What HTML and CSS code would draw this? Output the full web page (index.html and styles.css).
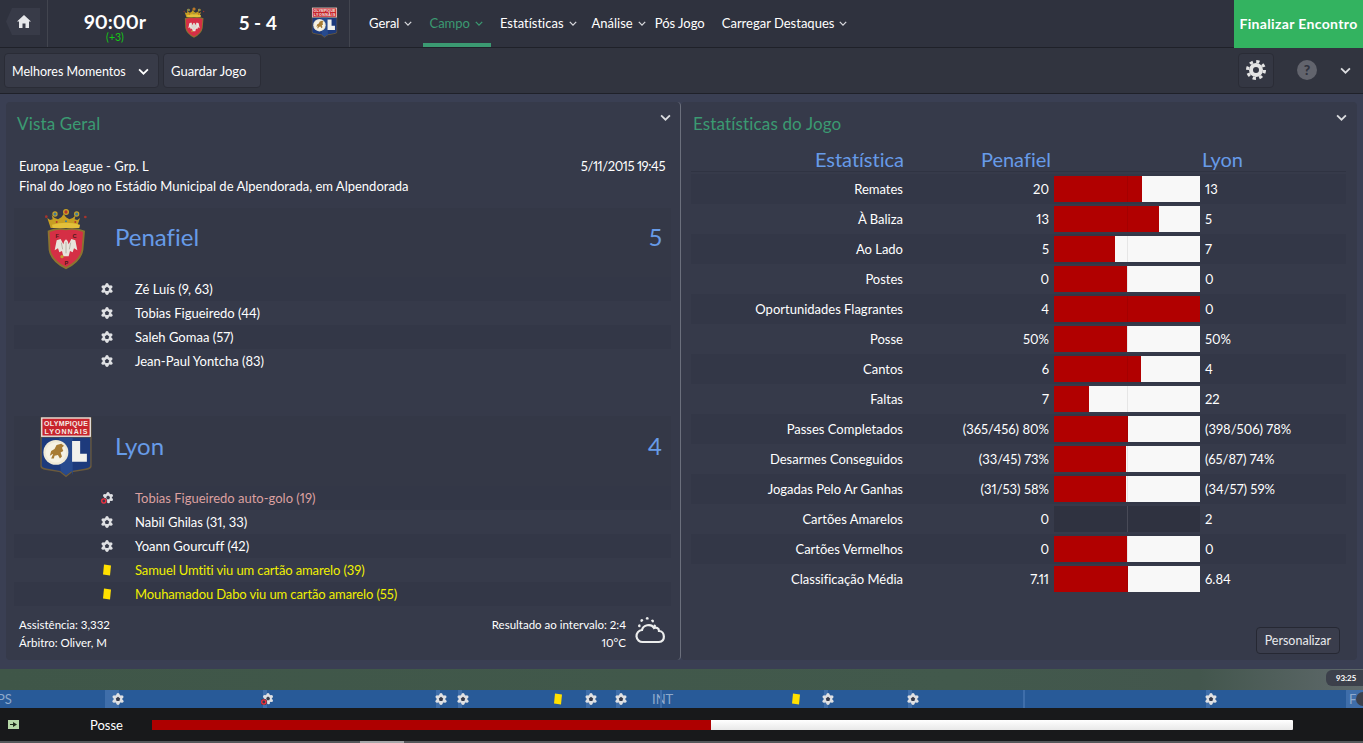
FILE: index.html
```html
<!DOCTYPE html>
<html lang="pt">
<head>
    <meta charset="UTF-8">
    <title>Vista Geral</title>
    <link rel="stylesheet" href="styles.css">
</head>
<body>
    <svg class="defs" width="0" height="0">
        <symbol id="chev" viewBox="0 0 10 6"><path d="M1 1l4 4 4-4" fill="none" stroke="currentColor" stroke-width="1.6"/></symbol>
        <symbol id="ball" viewBox="0 0 12 12">
            <g fill="#dfe0e3">
                <circle cx="6" cy="6" r="4.400"/>
                <circle cx="6" cy="1.700" r="1.600"/><circle cx="9.900" cy="3.800" r="1.600"/><circle cx="9.900" cy="8.200" r="1.600"/>
                <circle cx="6" cy="10.300" r="1.600"/><circle cx="2.100" cy="8.200" r="1.600"/><circle cx="2.100" cy="3.800" r="1.600"/>
            </g>
            <path d="M6 3.800l2.200 1.600-.8 2.600H4.600l-.8-2.600z" fill="#383c4c"/>
        </symbol>
        <symbol id="owngoal" viewBox="0 0 12 12">
            <g fill="#dfe0e3">
                <circle cx="7" cy="5.500" r="3.900"/>
                <circle cx="7" cy="1.600" r="1.500"/><circle cx="10.500" cy="3.500" r="1.500"/><circle cx="10.500" cy="7.500" r="1.500"/>
                <circle cx="7.500" cy="9.800" r="1.500"/><circle cx="3.500" cy="3.500" r="1.500"/>
            </g>
            <path d="M7 3.500l2 1.400-.7 2.300H5.900L5.200 4.900z" fill="#383c4c"/>
            <circle cx="2.800" cy="9" r="3.300" fill="#383c4c"/>
            <circle cx="2.800" cy="9" r="2.100" fill="none" stroke="#f0303f" stroke-width="1.400"/>
        </symbol>
        <symbol id="card" viewBox="0 0 10 12"><path d="M2 .6l7 .8-1 10-7-.8z" fill="#ffe000"/></symbol>
        <symbol id="penafiel" viewBox="24 6 132 186">
            <path d="M34 36l8 6 8-2-3-12 9 8 10 4 10-6 7-10 7 10 10 6 10-4 9-8-3 12 8 2 8-6-10 30H44z" fill="#c79f22"/>
            <path d="M48 56q42-12 84 0l-2 10H50z" fill="#e3c03a"/>
            <circle cx="90" cy="18" r="9" fill="#c9a226"/><circle cx="90" cy="18" r="5" fill="#b5362e"/>
            <circle cx="57" cy="24" r="8" fill="#c9a226"/><circle cx="57" cy="24" r="4.500" fill="#3c7c9c"/>
            <circle cx="122" cy="24" r="8" fill="#c9a226"/><circle cx="122" cy="24" r="4.500" fill="#3c7c9c"/>
            <circle cx="31" cy="32" r="4" fill="#a8342c"/><circle cx="148" cy="33" r="4" fill="#a8342c"/>
            <circle cx="62" cy="48" r="3" fill="#b5362e"/><circle cx="90" cy="46" r="3" fill="#3c7c9c"/><circle cx="118" cy="48" r="3" fill="#b5362e"/>
            <path d="M35 74q28-12 55-6 27-6 57 6l-5 58q-6 36-52 58-46-22-52-58z" fill="#8b7430"/>
            <path d="M41 78q26-10 49-5 25-5 51 5l-4 52q-6 32-47 53-41-21-47-53z" fill="#d52f45"/>
            <path d="M90 100l5 5 3 10 8-16 12 4 6 30-10-6-4 12-8-4-4 16h-16l-4-16-8 4-4-12-10 6 6-30 12-4 8 16 3-10z" fill="#e8e4dc"/>
            <path d="M90 108v34M76 110l4 20M104 110l-4 20" stroke="#a09a8e" stroke-width="2" fill="none"/>
            <circle cx="78" cy="152" r="5" fill="#c2a032"/>
        </symbol>
        <symbol id="lyon" viewBox="12 10 156 184">
            <path d="M14 14h152v146q-1 8-16 10l-42 7-18 15-18-15-42-7q-15-2-16-10z" fill="#6b5a3c"/>
            <rect x="16" y="14" width="148" height="58" fill="#e8e4e0"/>
            <rect x="20" y="18" width="140" height="50" fill="#c8242c"/>
            <path d="M18 74h144v84q-2 6-14 8l-42 7-16 13-16-13-42-7q-12-2-14-8z" fill="#1d3a7c"/>
            <path d="M70 74h40v112l-4-13-16 13-16-13z" fill="#274a8e"/>
            <circle cx="60" cy="118" r="37" fill="#efe9d6"/>
            <circle cx="60" cy="118" r="30" fill="#f6f2e4"/>
            <path d="M42 128l4-14 10-6 6-12 14-4 8 6-6 6 4 10-8 4 4 12-6 6-6-10-10 2-2 8h-8l6-14z" fill="#a87c34"/>
            <path d="M108 84h24v38h20v24h-44z" fill="#f2f1ec"/>
        </symbol>
    </svg>

    <header class="topbar">
        <div class="home-cell">
            <a class="home-btn">
                <svg width="14" height="13" viewBox="0 0 14 13"><path d="M7 0l7 6.500h-2V13H8.500V8.500h-3V13H2V6.500H0z" fill="#e6e7ea"/></svg>
            </a>
        </div>
        <div class="match-info">
            <div class="clock">
                <div class="clock-time">90:00r</div>
                <div class="clock-added">(+3)</div>
            </div>
            <svg class="crest-small home-crest" viewBox="24 6 132 186">
                <use href="#penafiel" x="24" y="6" width="132" height="186"/>
            </svg>
            <div class="score">5 - 4</div>
            <svg class="crest-small away-crest" viewBox="12 10 156 184">
                <use href="#lyon" x="12" y="10" width="156" height="184"/>
                <text class="crest-text" x="90" y="39" text-anchor="middle" textLength="130">OLYMPIQUE</text>
                <text class="crest-text" x="90" y="63" text-anchor="middle" textLength="128">LYONNAIS</text>
            </svg>
        </div>
        <nav class="nav">
            <a class="nav-item">Geral <svg class="nav-chev"><use href="#chev"/></svg></a>
            <a class="nav-item active">Campo <svg class="nav-chev"><use href="#chev"/></svg></a>
            <a class="nav-item nav-stats">Estatísticas <svg class="nav-chev"><use href="#chev"/></svg></a>
            <a class="nav-item nav-analise">Análise <svg class="nav-chev"><use href="#chev"/></svg></a>
            <a class="nav-item">Pós Jogo</a>
            <a class="nav-item">Carregar Destaques <svg class="nav-chev"><use href="#chev"/></svg></a>
        </nav>
        <a class="finish">Finalizar Encontro</a>
    </header>

    <div class="toolbar">
        <a class="btn btn-moments">Melhores Momentos <svg class="btn-chev"><use href="#chev"/></svg></a>
        <a class="btn btn-save">Guardar Jogo</a>
        <div class="toolbar-right">
            <a class="btn btn-gear">
                <svg width="20" height="20" viewBox="0 0 20 20">
                    <circle cx="10" cy="10" r="8.500" fill="none" stroke="#e4e4e4" stroke-width="3" stroke-dasharray="3.300 3.370"/>
                    <circle cx="10" cy="10" r="5" fill="none" stroke="#e4e4e4" stroke-width="4"/>
                </svg>
            </a>
            <span class="help">?</span>
            <svg class="toolbar-chev"><use href="#chev"/></svg>
        </div>
    </div>

    <main class="content">
        <section class="panel panel-left">
            <div class="panel-head">
                <h2>Vista Geral</h2>
                <svg class="panel-chev"><use href="#chev"/></svg>
            </div>
            <div class="info-row"><span>Europa League - Grp. L</span><span class="info-date">5/11/2015 19:45</span></div>
            <div class="info-row"><span>Final do Jogo no Estádio Municipal de Alpendorada, em Alpendorada</span></div>

            <div class="team team-home">
                <div class="team-head">
                    <div class="team-crest">
                        <svg class="crest-penafiel" viewBox="24 6 132 186">
                            <use href="#penafiel" x="24" y="6" width="132" height="186"/>
                            <text class="crest-letter" x="64" y="96" text-anchor="middle">F</text>
                            <text class="crest-letter" x="116" y="96" text-anchor="middle">C</text>
                            <text class="crest-letter" x="91" y="176" text-anchor="middle">P</text>
                        </svg>
                    </div>
                    <div class="team-name">Penafiel</div>
                    <div class="team-score">5</div>
                </div>
                <div class="event"><svg class="ev-icon"><use href="#ball"/></svg>Zé Luís (9, 63)</div>
                <div class="event"><svg class="ev-icon"><use href="#ball"/></svg>Tobias Figueiredo (44)</div>
                <div class="event"><svg class="ev-icon"><use href="#ball"/></svg>Saleh Gomaa (57)</div>
                <div class="event"><svg class="ev-icon"><use href="#ball"/></svg>Jean-Paul Yontcha (83)</div>
            </div>

            <div class="team team-away">
                <div class="team-head">
                    <div class="team-crest">
                        <svg class="crest-lyon" viewBox="12 10 156 184">
                            <use href="#lyon" x="12" y="10" width="156" height="184"/>
                            <text class="crest-text" x="90" y="39" text-anchor="middle" textLength="130">OLYMPIQUE</text>
                            <text class="crest-text" x="90" y="63" text-anchor="middle" textLength="128">LYONNAIS</text>
                        </svg>
                    </div>
                    <div class="team-name">Lyon</div>
                    <div class="team-score">4</div>
                </div>
                <div class="event own"><svg class="ev-icon"><use href="#owngoal"/></svg>Tobias Figueiredo auto-golo (19)</div>
                <div class="event"><svg class="ev-icon"><use href="#ball"/></svg>Nabil Ghilas (31, 33)</div>
                <div class="event"><svg class="ev-icon"><use href="#ball"/></svg>Yoann Gourcuff (42)</div>
                <div class="event booked"><svg class="ev-icon"><use href="#card"/></svg>Samuel Umtiti viu um cartão amarelo (39)</div>
                <div class="event booked"><svg class="ev-icon"><use href="#card"/></svg>Mouhamadou Dabo viu um cartão amarelo (55)</div>
            </div>

            <div class="panel-foot">
                <div class="foot-col">
                    <div>Assistência: 3,332</div>
                    <div>Árbitro: Oliver, M</div>
                </div>
                <div class="foot-col foot-right">
                    <div>Resultado ao intervalo: 2:4</div>
                    <div>10°C</div>
                </div>
                <svg class="weather" width="32" height="28" viewBox="0 0 32 28">
                    <circle cx="12" cy="10" r="7.500" fill="none" stroke="#eceded" stroke-width="3" stroke-linecap="round" stroke-dasharray="0 5.890"/>
                    <circle cx="12" cy="10" r="6.500" fill="#363a4a"/>
                    <path d="M8 26a6 6 0 0 1-1-12c1-5 9-7 12-2 2-1 5 0 5 3 6 0 7 11 0 11z" fill="#363a4a" stroke="#eceded" stroke-width="2.200"/>
                </svg>
            </div>
        </section>

        <section class="panel panel-right">
            <div class="panel-head">
                <h2>Estatísticas do Jogo</h2>
                <svg class="panel-chev"><use href="#chev"/></svg>
            </div>
            <div class="stat-head">
                <div class="s-label">Estatística</div>
                <div class="s-home">Penafiel</div>
                <div class="s-bar"></div>
                <div class="s-away">Lyon</div>
            </div>
            <div class="stat-row"><div class="s-label">Remates</div><div class="s-home">20</div><div class="s-bar"><div class="s-fill" style="width:88px"></div></div><div class="s-away">13</div></div>
            <div class="stat-row"><div class="s-label">À Baliza</div><div class="s-home">13</div><div class="s-bar"><div class="s-fill" style="width:105px"></div></div><div class="s-away">5</div></div>
            <div class="stat-row"><div class="s-label">Ao Lado</div><div class="s-home">5</div><div class="s-bar"><div class="s-fill" style="width:61px"></div></div><div class="s-away">7</div></div>
            <div class="stat-row"><div class="s-label">Postes</div><div class="s-home">0</div><div class="s-bar"><div class="s-fill" style="width:73px"></div></div><div class="s-away">0</div></div>
            <div class="stat-row"><div class="s-label">Oportunidades Flagrantes</div><div class="s-home">4</div><div class="s-bar"><div class="s-fill" style="width:146px"></div></div><div class="s-away">0</div></div>
            <div class="stat-row"><div class="s-label">Posse</div><div class="s-home">50%</div><div class="s-bar"><div class="s-fill" style="width:73px"></div></div><div class="s-away">50%</div></div>
            <div class="stat-row"><div class="s-label">Cantos</div><div class="s-home">6</div><div class="s-bar"><div class="s-fill" style="width:87px"></div></div><div class="s-away">4</div></div>
            <div class="stat-row"><div class="s-label">Faltas</div><div class="s-home">7</div><div class="s-bar"><div class="s-fill" style="width:35px"></div></div><div class="s-away">22</div></div>
            <div class="stat-row"><div class="s-label">Passes Completados</div><div class="s-home">(365/456) 80%</div><div class="s-bar"><div class="s-fill" style="width:74px"></div></div><div class="s-away">(398/506) 78%</div></div>
            <div class="stat-row"><div class="s-label">Desarmes Conseguidos</div><div class="s-home">(33/45) 73%</div><div class="s-bar"><div class="s-fill" style="width:72px"></div></div><div class="s-away">(65/87) 74%</div></div>
            <div class="stat-row"><div class="s-label">Jogadas Pelo Ar Ganhas</div><div class="s-home">(31/53) 58%</div><div class="s-bar"><div class="s-fill" style="width:72px"></div></div><div class="s-away">(34/57) 59%</div></div>
            <div class="stat-row"><div class="s-label">Cartões Amarelos</div><div class="s-home">0</div><div class="s-bar s-empty"></div><div class="s-away">2</div></div>
            <div class="stat-row"><div class="s-label">Cartões Vermelhos</div><div class="s-home">0</div><div class="s-bar"><div class="s-fill" style="width:73px"></div></div><div class="s-away">0</div></div>
            <div class="stat-row"><div class="s-label">Classificação Média</div><div class="s-home">7.11</div><div class="s-bar"><div class="s-fill" style="width:74px"></div></div><div class="s-away">6.84</div></div>
            <div class="panel-actions"><a class="btn btn-custom">Personalizar</a></div>
        </section>
    </main>

    <div class="pitch-strip"><span class="pitch-time">93:25</span></div>

    <div class="timeline">
        <span class="tl-label" style="left:-3px">PS</span>
        <span class="tl-label" style="left:652px">INT</span>
        <i class="tl-tick" style="left:660px"></i>
        <i class="tl-tick" style="left:1023px"></i>
        <i class="tl-mark" style="left:105px;width:14px"></i>
        <i class="tl-mark" style="left:263px"></i>
        <i class="tl-mark" style="left:436px"></i>
        <i class="tl-mark" style="left:458px"></i>
        <i class="tl-mark" style="left:586px"></i>
        <i class="tl-mark" style="left:616px"></i>
        <i class="tl-mark" style="left:824px"></i>
        <i class="tl-mark" style="left:908px"></i>
        <i class="tl-mark" style="left:1206px"></i>
        <i class="tl-mark" style="left:1346px;width:17px"></i>
        <span class="tl-label" style="left:1349px">F</span>
        <i class="tl-knob"></i>
        <svg class="tl-icon" style="left:112px"><use href="#ball"/></svg>
        <svg class="tl-icon" style="left:261px"><use href="#owngoal"/></svg>
        <svg class="tl-icon" style="left:435px"><use href="#ball"/></svg>
        <svg class="tl-icon" style="left:457px"><use href="#ball"/></svg>
        <svg class="tl-icon" style="left:552px"><use href="#card"/></svg>
        <svg class="tl-icon" style="left:585px"><use href="#ball"/></svg>
        <svg class="tl-icon" style="left:615px"><use href="#ball"/></svg>
        <svg class="tl-icon" style="left:790px"><use href="#card"/></svg>
        <svg class="tl-icon" style="left:822px"><use href="#ball"/></svg>
        <svg class="tl-icon" style="left:907px"><use href="#ball"/></svg>
        <svg class="tl-icon" style="left:1205px"><use href="#ball"/></svg>
    </div>

    <footer class="possession">
        <svg class="poss-icon" width="11" height="9" viewBox="0 0 11 9">
            <rect width="11" height="9" fill="#b6d8a8"/>
            <path d="M2 4h3V2l4 2.500L5 7V5H2z" fill="#1c2a18"/>
        </svg>
        <span class="poss-label">Posse</span>
        <div class="poss-bar"><div class="poss-fill" style="width:559px"></div></div>
    </footer>
    <div class="bottom-edge"><span class="bottom-tab"></span></div>
</body>
</html>
```

FILE: styles.css
```css
* {
    box-sizing: border-box;
}
html, body {
    height: 100%;
}
body {
    margin: 0;
    overflow: hidden;
    font-family: "Lato", "Open Sans", sans-serif;
    font-size: 13px;
    font-variant-numeric: proportional-nums;
    font-variant-ligatures: none;
    color: #fff;
    background: #3a3f53;
    display: flex;
    flex-direction: column;
}
.defs {
    position: absolute;
}
.crest-text {
    font-family: "Liberation Sans", sans-serif;
    font-size: 21px;
    font-weight: 700;
    fill: #f4ece6;
}
.crest-letter {
    font-family: "Liberation Sans", sans-serif;
    font-size: 17px;
    font-weight: 700;
    fill: #4a1a18;
}
h2 {
    margin: 0;
    font-size: 17px;
    font-weight: 400;
    letter-spacing: .15px;
    color: #3b9a72;
}

/* top bar */
.topbar {
    height: 48px;
    flex: none;
    display: flex;
    background: #2f323e;
    border-bottom: 1px solid #1f2129;
}
.home-cell {
    width: 48px;
    padding: 8px 0 0 6px;
    border-right: 1px solid #42454f;
}
.home-btn {
    display: flex;
    align-items: center;
    justify-content: center;
    width: 34px;
    height: 27px;
    padding-left: 2px;
    background: #383b48;
    clip-path: polygon(6px 0, 100% 0, 100% 100%, 6px 100%, 0 50%);
}
.match-info {
    width: 302px;
    display: flex;
    align-items: center;
    border-right: 1px solid #42454f;
}
.clock {
    width: 132px;
    padding-left: 2px;
    text-align: center;
}
.clock-time {
    font-size: 19.500px;
    font-weight: 700;
    line-height: 22px;
    margin-top: 5px;
}
.clock-added {
    font-size: 10.500px;
    line-height: 9px;
    color: #14c814;
}
.crest-small {
    height: 31px;
    width: 22px;
}
.home-crest {
    margin-left: 3px;
    margin-bottom: 2px;
}
.away-crest {
    width: 27px;
    margin-bottom: 2px;
}
.score {
    width: 106px;
    text-align: center;
    font-size: 19px;
    font-weight: 700;
    margin-bottom: 2px;
}
.nav {
    flex: 1;
    display: flex;
    padding-left: 13px;
}
.nav-item {
    height: 47px;
    padding: 0 6px 1px;
    margin-right: 5px;
    display: flex;
    align-items: center;
    gap: 5px;
    white-space: nowrap;
}
.nav-stats {
    margin-right: 3px;
}
.nav-analise {
    margin-right: -3px;
}
.nav-item.active {
    color: #3b9a72;
    border-bottom: 4px solid #3b9a72;
    padding: 3px 8px 0 6px;
    margin-right: 3px;
}
.nav-chev {
    width: 8px;
    height: 5px;
    color: #d8d9dd;
}
.nav-item.active .nav-chev {
    color: #3b9a72;
}
.finish {
    width: 129px;
    height: 48px;
    margin-bottom: -1px;
    padding-bottom: 2px;
    background: #33b360;
    font-size: 14px;
    font-weight: 700;
    letter-spacing: .35px;
    display: flex;
    align-items: center;
    justify-content: center;
    white-space: nowrap;
}

/* toolbar */
.toolbar {
    height: 46px;
    flex: none;
    display: flex;
    align-items: center;
    padding: 0 0 1px 4px;
    gap: 4px;
    background: #31343f;
    border-bottom: 1px solid #1f2129;
}
.btn {
    display: flex;
    align-items: center;
    background: #383b48;
    border: 1px solid #2a2c36;
    border-radius: 4px;
}
.btn-moments {
    width: 155px;
    height: 35px;
    padding: 2px 9px 0 7px;
    justify-content: space-between;
    font-size: 12.500px;
}
.btn-chev {
    width: 11px;
    height: 7px;
}
.btn-save {
    width: 98px;
    height: 35px;
    padding: 2px 0 0 7px;
}
.toolbar-right {
    margin-left: auto;
    display: flex;
    align-items: center;
}
.btn-gear {
    width: 36px;
    height: 35px;
    justify-content: center;
    background: #343743;
}
.help {
    width: 20px;
    height: 20px;
    margin-left: 23px;
    border-radius: 50%;
    background: #62646d;
    color: #2f323e;
    font-weight: 900;
    font-size: 14px;
    line-height: 20px;
    text-align: center;
}
.toolbar-chev {
    width: 11px;
    height: 7px;
    margin: 0 12px 0 23px;
    color: #dcdde0;
}

/* panels */
.content {
    height: 575px;
    flex: none;
    display: flex;
    padding: 8px 6px 9px;
}
.panel {
    background: #363a4a;
    border-radius: 4px;
    position: relative;
}
.panel-left {
    width: 675px;
    padding: 0 9px 0 8px;
    border-right: 1px solid #6b6f7c;
}
.panel-right {
    flex: 1;
    padding: 0 11px 0 10px;
}
.panel-head {
    height: 46px;
    padding: 14px 3px 0 3px;
    line-height: 16px;
    display: flex;
    justify-content: space-between;
    margin-bottom: 8px;
}
.panel-right .panel-head {
    height: 45px;
    padding-left: 2px;
    margin-bottom: 0;
}
.panel-chev {
    width: 11px;
    height: 7px;
    margin: -2px -3px 0 0;
    color: #dcdde0;
}
.panel-right .panel-chev {
    margin-right: -4px;
}
.info-row {
    height: 20px;
    line-height: 20px;
    padding: 0 6px 0 5px;
    display: flex;
    justify-content: space-between;
}
.info-date {
    letter-spacing: -.45px;
}
.team-home {
    margin-top: 12px;
}
.team-away {
    margin-top: 43px;
}
.team-head {
    height: 69px;
    padding-bottom: 12px;
    display: flex;
    align-items: center;
    background: #343847;
}
.team-away .team-head {
    height: 70px;
}
.team-crest {
    width: 101px;
    align-self: flex-start;
    display: flex;
    justify-content: center;
    padding-left: 2px;
}
.crest-penafiel {
    width: 44px;
    height: 62px;
}
.crest-lyon {
    width: 54px;
    height: 62px;
}
.team-name {
    flex: 1;
    font-size: 24px;
    color: #679be8;
}
.team-score {
    padding-right: 9px;
    font-size: 24px;
    color: #679be8;
}
.event {
    height: 24px;
    padding-left: 121px;
    display: flex;
    align-items: center;
    position: relative;
}
.event:nth-child(even) {
    background: #333747;
}
.event.own {
    color: #dca0a0;
}
.event.booked {
    color: #f0f000;
    letter-spacing: -.12px;
}
.ev-icon {
    position: absolute;
    left: 87px;
    top: 6px;
    width: 12px;
    height: 12px;
}
.panel-foot {
    display: flex;
    padding: 10px 4px 0 5px;
    font-size: 11.500px;
    line-height: 18px;
}
.foot-col {
    flex: 1;
}
.foot-right {
    text-align: right;
}
.weather {
    margin: 0 0 0 9px;
}

/* stats table */
.stat-head, .stat-row {
    display: flex;
    align-items: center;
}
.stat-head {
    height: 25px;
    margin-bottom: 2px;
    font-size: 20px;
    color: #679be8;
    border-bottom: 1px solid #2f3342;
}
.stat-head .s-label {
    width: 213px;
}
.stat-head .s-home {
    width: 147px;
}
.stat-head .s-bar {
    margin: 0 2px 0 3px;
    background: none;
}
.stat-row {
    height: 30px;
}
.stat-row:nth-child(odd) {
    background: #333747;
}
.s-label {
    width: 212px;
    text-align: right;
    white-space: nowrap;
}
.s-home {
    width: 146px;
    text-align: right;
    white-space: nowrap;
}
.s-bar {
    width: 146px;
    height: 26px;
    margin: 0 5px;
    position: relative;
    background: #f8f8f8;
}
.s-bar::after {
    content: "";
    position: absolute;
    left: 50%;
    top: 0;
    bottom: 0;
    width: 1px;
    background: rgba(0, 0, 0, .07);
}
.stat-head .s-bar::after {
    display: none;
}
.s-bar.s-empty {
    background: #2f3240;
}
.s-bar.s-empty::after {
    background: rgba(255, 255, 255, .12);
}
.s-fill {
    height: 100%;
    background: #b10000;
}
.s-away {
    white-space: nowrap;
}
.panel-actions {
    position: absolute;
    right: 17px;
    bottom: 6px;
}
.btn-custom {
    height: 27px;
    padding: 0 8px;
    background: #3a3d4c;
    border-color: #262833;
    color: #e8e9ec;
    font-size: 12.500px;
}

/* match strip */
.pitch-strip {
    height: 21px;
    flex: none;
    position: relative;
    background: linear-gradient(90deg, #3f5648 0, #42594c 70%, #43564d 88%, #5f696b 100%);
}
.pitch-time {
    position: absolute;
    right: 0;
    top: 1px;
    width: 37px;
    height: 16px;
    padding-left: 10px;
    background: #3c404b;
    border-radius: 6px 0 0 6px;
    font-size: 8px;
    font-weight: 700;
    line-height: 16px;
}
.timeline {
    height: 18px;
    flex: none;
    position: relative;
    overflow: hidden;
    background: #285a98;
}
.tl-label {
    position: absolute;
    top: 0;
    font-size: 13px;
    line-height: 18px;
    color: #8ea9cc;
}
.tl-tick {
    position: absolute;
    top: 0;
    width: 2px;
    height: 18px;
    background: #3f6eaa;
}
.tl-mark {
    position: absolute;
    top: 0;
    width: 4px;
    height: 18px;
    background: #3f6eaa;
}
.tl-knob {
    position: absolute;
    left: 1356px;
    top: 2px;
    width: 14px;
    height: 14px;
    border-radius: 50%;
    background: #3c404b;
}
.tl-icon {
    position: absolute;
    top: 3px;
    width: 12px;
    height: 12px;
}
.possession {
    height: 33px;
    flex: none;
    display: flex;
    align-items: center;
    padding-left: 8px;
    background: #18191b;
}
.poss-label {
    width: 62px;
    margin-left: 71px;
    font-size: 13px;
}
.poss-bar {
    width: 1141px;
    height: 10px;
    background: linear-gradient(#ffffff, #e8e8e8);
    border-radius: 1px;
}
.poss-fill {
    height: 100%;
    background: #ae0000;
}
.bottom-edge {
    flex: 1;
    background: #55575a;
}
.bottom-tab {
    display: block;
    width: 44px;
    height: 100%;
    margin-left: 360px;
    background: #a4a5a7;
}
```
